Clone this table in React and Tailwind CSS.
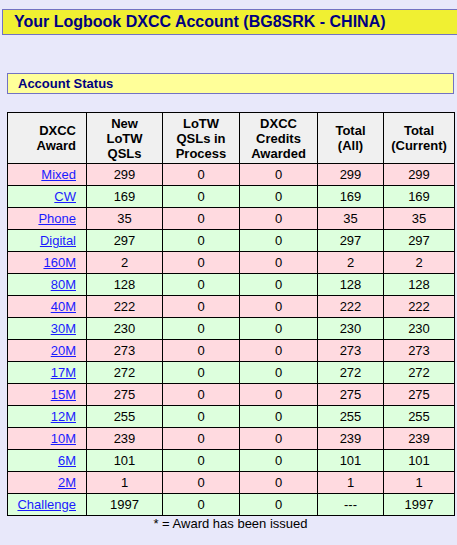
const rows = [
  ["Mixed", "299", "0", "0", "299", "299"],
  ["CW", "169", "0", "0", "169", "169"],
  ["Phone", "35", "0", "0", "35", "35"],
  ["Digital", "297", "0", "0", "297", "297"],
  ["160M", "2", "0", "0", "2", "2"],
  ["80M", "128", "0", "0", "128", "128"],
  ["40M", "222", "0", "0", "222", "222"],
  ["30M", "230", "0", "0", "230", "230"],
  ["20M", "273", "0", "0", "273", "273"],
  ["17M", "272", "0", "0", "272", "272"],
  ["15M", "275", "0", "0", "275", "275"],
  ["12M", "255", "0", "0", "255", "255"],
  ["10M", "239", "0", "0", "239", "239"],
  ["6M", "101", "0", "0", "101", "101"],
  ["2M", "1", "0", "0", "1", "1"],
  ["Challenge", "1997", "0", "0", "---", "1997"],
];

export default function App() {
  return (
    <div className="w-[457px] h-[545px] overflow-hidden bg-[#e8e8fa] text-black" style={{ fontFamily: '"Liberation Sans", Arial, sans-serif' }}>
      <div className="pt-[9px] pl-[2px]">
        <div className="w-[470px] h-[26px] border border-[#7272c2] bg-[#f0f032] pl-[11px] flex items-center text-[16px] font-bold text-[#000080] leading-none">
          Your Logbook DXCC Account (BG8SRK - CHINA)
        </div>
      </div>
      <div className="pt-[38px] px-[7px] w-[454px]">
        <div className="w-[447px] h-[21px] border border-[#7272c2] bg-[#ffff99] pl-[10px] flex items-center text-[13px] font-bold text-[#000080] leading-none">
          Account Status
        </div>
        <table className="mt-[18px] border-collapse w-[447px] table-fixed text-[13px] leading-[15px]">
          <colgroup>
            <col className="w-[79px]" />
            <col className="w-[76px]" />
            <col className="w-[77px]" />
            <col className="w-[78px]" />
            <col className="w-[66px]" />
            <col className="w-[71px]" />
          </colgroup>
          <thead>
            <tr className="h-[51px] bg-[#f0f0f0] font-bold">
              <th className="border border-black text-right pr-[10px] font-bold">DXCC<br />Award</th>
              <th className="border border-black text-center font-bold">New<br />LoTW<br />QSLs</th>
              <th className="border border-black text-center font-bold">LoTW<br />QSLs in<br />Process</th>
              <th className="border border-black text-center font-bold">DXCC<br />Credits<br />Awarded</th>
              <th className="border border-black text-center font-bold">Total<br />(All)</th>
              <th className="border border-black text-center font-bold">Total<br />(Current)</th>
            </tr>
          </thead>
          <tbody>
            {rows.map((r, i) => (
              <tr key={r[0]} className={i % 2 === 0 ? "h-[22px] bg-[#ffdae0]" : "h-[22px] bg-[#ddffdd]"}>
                <td className="border border-black text-right pr-[10px]">
                  <a href="#" className="text-[#1a1aff] underline">{r[0]}</a>
                </td>
                <td className="border border-black text-center">{r[1]}</td>
                <td className="border border-black text-center">{r[2]}</td>
                <td className="border border-black text-center">{r[3]}</td>
                <td className="border border-black text-center">{r[4]}</td>
                <td className="border border-black text-center">{r[5]}</td>
              </tr>
            ))}
          </tbody>
        </table>
        <div className="w-[447px] text-center text-[13px] leading-[15px]">* = Award has been issued</div>
      </div>
    </div>
  );
}
